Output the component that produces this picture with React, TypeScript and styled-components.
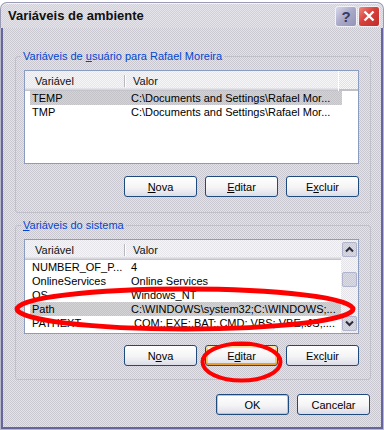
import styled, { createGlobalStyle, css } from "styled-components"

const GlobalStyle = createGlobalStyle`
  html, body {
    margin: 0;
    padding: 0;
    background: #ffffff;
  }
  body {
    font-family: "Liberation Sans", Arial, sans-serif;
    font-size: 11px;
    color: #000;
  }
`

// the screenshot is dithered, so the grey areas are a 1px checker
const dither = (a: string, b: string) => css`
  background-color: ${a};
  background-image: repeating-conic-gradient(${a} 0% 25%, ${b} 0% 50%);
  background-size: 2px 2px;
`

const Window = styled.div`
  position: relative;
  width: 384px;
  height: 430px;
  display: flex;
  flex-direction: column;
  padding-top: 2px;
  box-sizing: border-box;
`

const TitleBar = styled.div`
  height: 26px;
  flex: none;
  display: flex;
  align-items: center;
  padding: 0 3px 0 7px;
  border: 1px solid #9a9ab4;
  border-bottom: none;
  border-radius: 7px 7px 0 0;
  box-sizing: border-box;
  ${dither("#d0d0d8", "#e4e4ea")};
  box-shadow: inset 0 1px #f4f4f8;
`

const Title = styled.span`
  font-weight: bold;
  font-size: 13px;
  color: #111;
`

const TitleButtons = styled.div`
  margin-left: auto;
  display: flex;
  gap: 1px;
  margin-top: 1px;
`

const CapButton = styled.div<{ $close?: boolean }>`
  width: 22px;
  height: 21px;
  box-sizing: border-box;
  border: 1px solid #f2f2f6;
  border-radius: 3px;
  display: flex;
  align-items: center;
  justify-content: center;
  font-weight: bold;
  font-size: 15px;
  color: #3a3a60;
  background: ${(p) =>
    p.$close
      ? "linear-gradient(135deg, #f08a80, #d8403a 45%, #c02c2c)"
      : "linear-gradient(135deg, #d8d8ea, #a8a8c8 50%, #9494b8)"};
`

const Body = styled.div`
  flex: 1;
  display: flex;
  flex-direction: column;
  padding: 22px 12px 0 14px;
  border: 1px solid #b8b8cc;
  border-top: none;
  box-sizing: border-box;
  ${dither("#c9c8d0", "#e4e4e8")};
  box-shadow: inset 2px 0 #66669a, inset -2px 0 #66669a, inset 0 -2px #66669a;
`

const Group = styled.fieldset<{ $gap: number }>`
  margin: 0 0 ${(p) => p.$gap}px 0;
  padding: 0 11px 0 8px;
  border: 1px solid #c0c0c8;
  border-radius: 3px;
  min-width: 0;
`

const Legend = styled.legend`
  padding: 0 2px;
  margin-left: -3px;
  line-height: 13px;
  color: #0046d5;
`

const List = styled.div<{ $height: number }>`
  margin-top: 7px;
  height: ${(p) => p.$height}px;
  border: 1px solid #8a9cc0;
  background: #ffffff;
  display: flex;
  box-sizing: border-box;
  overflow: hidden;
`

const ListContent = styled.div`
  flex: 1;
  min-width: 0;
  display: flex;
  flex-direction: column;
`

const Header = styled.div`
  height: 20px;
  flex: none;
  display: flex;
  ${dither("#e6e6ea", "#f6f6f8")};
  box-shadow: inset 0 -1px #c4c4cc, inset 0 -2px #d6d6dc, inset 0 -3px #e2e2e6;
`

const HeadCell = styled.div<{ $width?: number; $pad: number; $sep?: boolean }>`
  position: relative;
  box-sizing: border-box;
  width: ${(p) => (p.$width ? `${p.$width}px` : "auto")};
  flex: ${(p) => (p.$width ? "none" : 1)};
  padding-left: ${(p) => p.$pad}px;
  line-height: 20px;
  color: #111;
  ${(p) =>
    p.$sep &&
    css`
      &::after {
        content: "";
        position: absolute;
        right: 0;
        top: 4px;
        bottom: 4px;
        width: 1px;
        background: #b8b8c0;
        box-shadow: 1px 0 #ffffff;
      }
    `}
`

const HeadFiller = styled.div`
  width: 19px;
  flex: none;
  ${dither("#e0e0e4", "#f8f8f8")};
  border-left: 1px solid #ffffff;
  box-shadow: inset 0 -2px #c0c0c8;
`

const Row = styled.div<{ $selected?: boolean }>`
  margin-left: 5px;
  width: 312px;
  height: 14px;
  display: flex;
  line-height: 14px;
  white-space: nowrap;
  ${(p) => p.$selected && dither("#c4c4c8", "#d4d4d6")};
`

const NameCell = styled.div`
  width: 95px;
  padding-left: 2px;
  box-sizing: border-box;
  overflow: hidden;
`

const ValueCell = styled.div`
  flex: 1;
  padding-left: 6px;
  overflow: hidden;
`

const ScrollBar = styled.div`
  width: 17px;
  flex: none;
  display: flex;
  flex-direction: column;
  align-items: center;
  padding: 2px 0;
  box-sizing: border-box;
  ${dither("#e4e4e8", "#f6f6f8")};
`

const ScrollButton = styled.div<{ $bottom?: boolean }>`
  width: 15px;
  height: 15px;
  box-sizing: border-box;
  border: 1px solid #b0b4cc;
  border-radius: 2px;
  ${dither("#c8c8d8", "#dcdce6")};
  display: flex;
  align-items: center;
  justify-content: center;
  margin-top: ${(p) => (p.$bottom ? "auto" : "0")};
`

const Thumb = styled(ScrollButton)`
  margin-top: 15px;
`

const ButtonRow = styled.div<{ $top: number; $bottom: number; $right?: number }>`
  display: flex;
  justify-content: flex-end;
  gap: 8px;
  margin-top: ${(p) => p.$top}px;
  margin-bottom: ${(p) => p.$bottom}px;
  padding-right: ${(p) => p.$right ?? 0}px;
`

const Button = styled.div<{ $focus?: boolean; $default?: boolean }>`
  width: 73px;
  height: 21px;
  box-sizing: border-box;
  border: 1px solid #1f4a7e;
  border-radius: 3px;
  background: linear-gradient(#ffffff, #f4f4f6 55%, #dcdce8);
  display: flex;
  align-items: center;
  justify-content: center;
  color: #000;
  ${(p) =>
    p.$focus &&
    css`
      box-shadow: inset 0 2px #ffe6a0, inset 0 -2px #e8a030, inset 2px 0 #f8c860,
        inset -2px 0 #f8c860;
    `}
  ${(p) =>
    p.$default &&
    css`
      box-shadow: inset 0 0 0 1px #b0c4ec;
    `}
`

const Key = styled.span`
  text-decoration: underline;
`

const Annotations = styled.svg`
  position: absolute;
  left: 0;
  top: 0;
  pointer-events: none;
`

const Chevron = ({ down }: { down?: boolean }) => (
  <svg width="9" height="7" viewBox="0 0 9 7">
    <polyline
      points={down ? "1,1.5 4.5,5 8,1.5" : "1,5.5 4.5,2 8,5.5"}
      fill="none"
      stroke="#2a2a3a"
      strokeWidth="2"
    />
  </svg>
)

const systemRows = [
  ["NUMBER_OF_P...", "4"],
  ["OnlineServices", "Online Services"],
  ["OS", "Windows_NT"],
  ["Path", "C:\\WINDOWS\\system32;C:\\WINDOWS;..."],
  ["PATHEXT", ".COM;.EXE;.BAT;.CMD;.VBS;.VBE;.JS;...."],
]

export default function App() {
  return (
    <>
      <GlobalStyle />
      <Window>
        <TitleBar>
          <Title>Variáveis de ambiente</Title>
          <TitleButtons>
            <CapButton>?</CapButton>
            <CapButton $close>
              <svg width="12" height="12" viewBox="0 0 12 12">
                <path d="M1.5 1.5 L10.5 10.5 M10.5 1.5 L1.5 10.5" stroke="#fff" strokeWidth="2.4" />
              </svg>
            </CapButton>
          </TitleButtons>
        </TitleBar>

        <Body>
          <Group $gap={6}>
            <Legend>
              Variáveis de <Key>u</Key>suário para Rafael Moreira
            </Legend>
            <List $height={94}>
              <ListContent>
                <Header>
                  <HeadCell $width={100} $pad={10} $sep>Variável</HeadCell>
                  <HeadCell $pad={8}>Valor</HeadCell>
                  <HeadFiller />
                </Header>
                <Row $selected>
                  <NameCell>TEMP</NameCell>
                  <ValueCell>C:\Documents and Settings\Rafael Mor...</ValueCell>
                </Row>
                <Row>
                  <NameCell>TMP</NameCell>
                  <ValueCell>C:\Documents and Settings\Rafael Mor...</ValueCell>
                </Row>
              </ListContent>
            </List>
            <ButtonRow $top={12} $bottom={15}>
              <Button><span><Key>N</Key>ova</span></Button>
              <Button><span><Key>E</Key>ditar</span></Button>
              <Button><span>E<Key>x</Key>cluir</span></Button>
            </ButtonRow>
          </Group>

          <Group $gap={0}>
            <Legend>
              <Key>V</Key>ariáveis do sistema
            </Legend>
            <List $height={95}>
              <ListContent>
                <Header>
                  <HeadCell $width={100} $pad={10} $sep>Variável</HeadCell>
                  <HeadCell $pad={8}>Valor</HeadCell>
                </Header>
                {systemRows.map(([name, value]) => (
                  <Row key={name} $selected={name === "Path"}>
                    <NameCell>{name}</NameCell>
                    <ValueCell>{value}</ValueCell>
                  </Row>
                ))}
              </ListContent>
              <ScrollBar>
                <ScrollButton><Chevron /></ScrollButton>
                <Thumb />
                <ScrollButton $bottom><Chevron down /></ScrollButton>
              </ScrollBar>
            </List>
            <ButtonRow $top={11} $bottom={13}>
              <Button><span>N<Key>o</Key>va</span></Button>
              <Button $focus><span>E<Key>d</Key>itar</span></Button>
              <Button><span>Exc<Key>l</Key>uir</span></Button>
            </ButtonRow>
          </Group>

          <ButtonRow $top={14} $bottom={0} $right={1}>
            <Button $default>OK</Button>
            <Button>Cancelar</Button>
          </ButtonRow>
        </Body>

        <Annotations width="384" height="430" viewBox="0 0 384 430">
          <ellipse cx="185" cy="309" rx="168" ry="20" fill="none" stroke="#ff0000" strokeWidth="5" />
          <ellipse cx="241.5" cy="362" rx="39" ry="18.5" fill="none" stroke="#ff0000" strokeWidth="4" />
        </Annotations>
      </Window>
    </>
  )
}
